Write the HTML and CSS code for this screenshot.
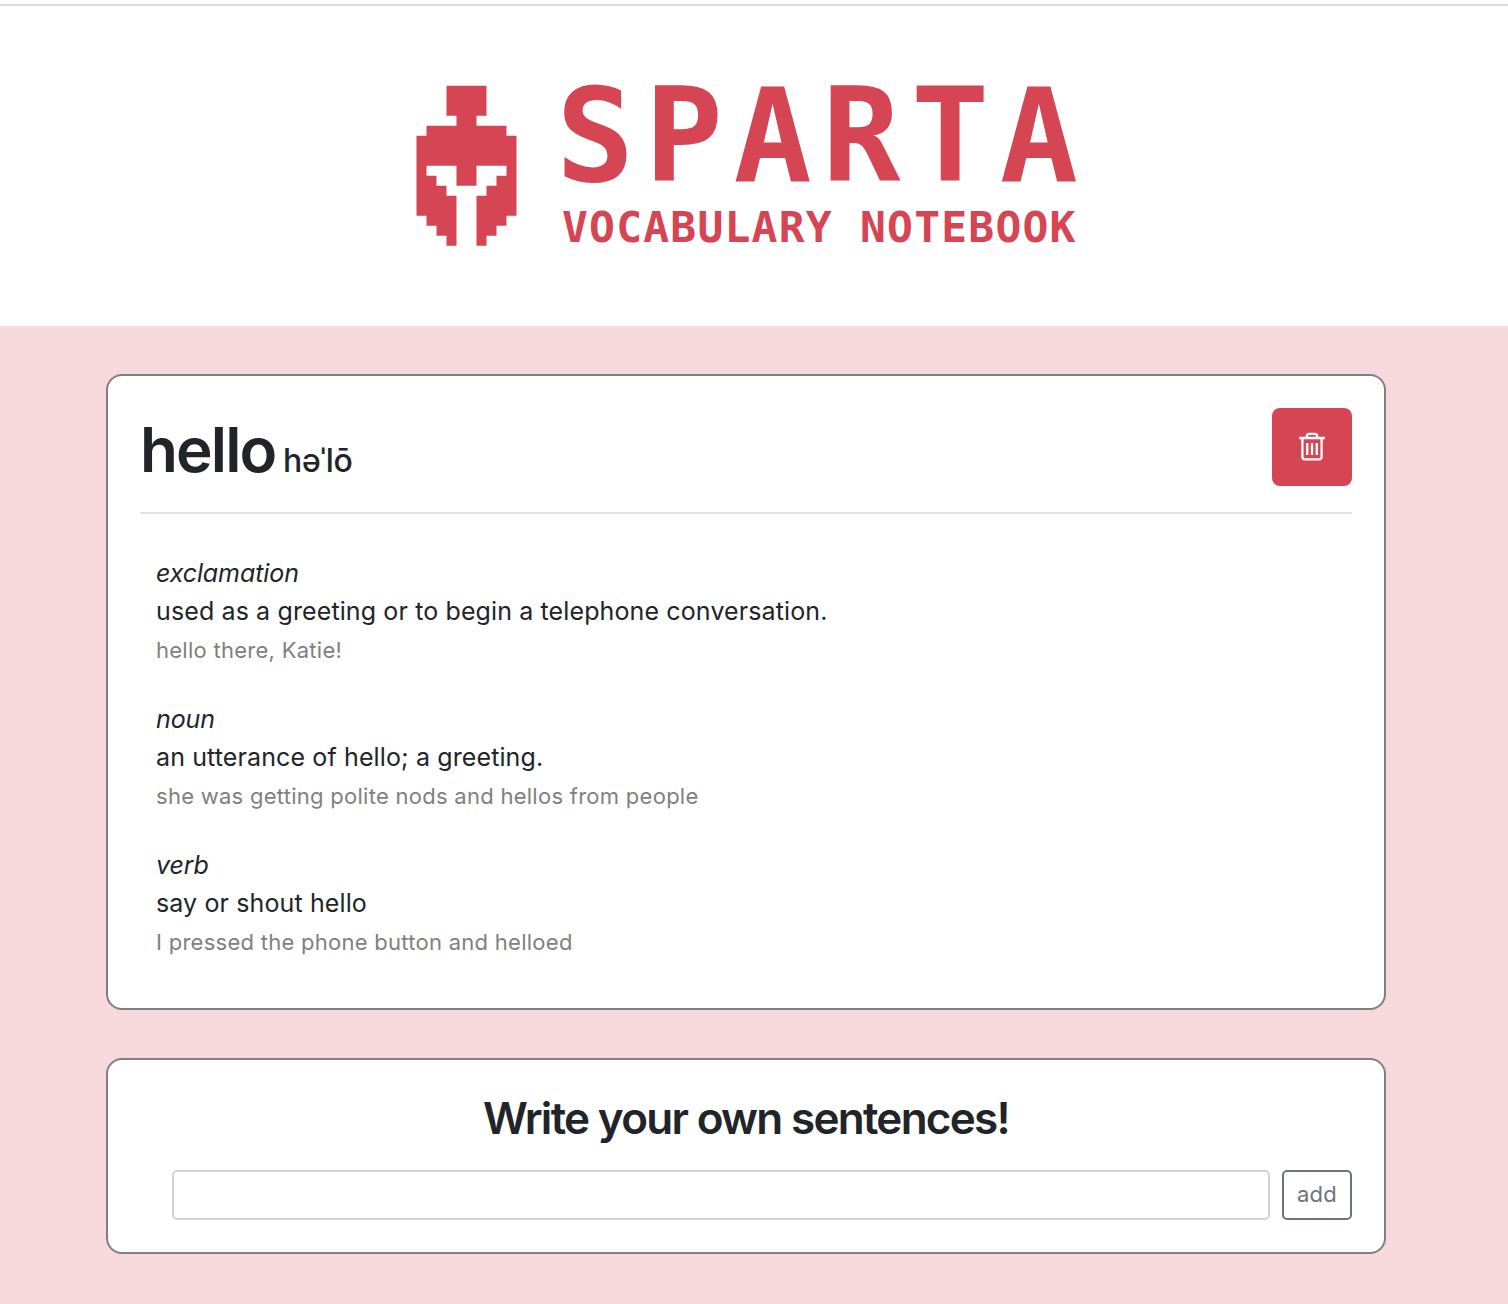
FILE: index.html
```html
<!DOCTYPE html>
<html lang="en">
<head>
    <meta charset="UTF-8">
    <meta name="viewport" content="width=device-width, initial-scale=1.0">
    <title>Sparta Vocabulary Notebook</title>
    <link rel="stylesheet" href="styles.css">
</head>
<body>
    <header class="banner">
        <svg class="logo" width="662" height="164" viewBox="0 0 662 164">
            <polygon transform="translate(1.5 1.7) scale(10)" points="3,0 7,0 7,3 6,3 6,4 9,4 9,5 10,5 10,13 9,13 9,14 8,14 8,15 7,15 7,16 6,16 6,11 7,11 7,10 8,10 8,9 9,9 9,8 6,8 6,10 4,10 4,8 1,8 1,9 2,9 2,10 3,10 3,11 4,11 4,16 3,16 3,15 2,15 2,14 1,14 1,13 0,13 0,5 1,5 1,4 4,4 4,3 3,3"/>
            <text class="logo-title" x="141" y="97">SPARTA</text>
            <text class="logo-sub" x="147" y="158">VOCABULARY NOTEBOOK</text>
        </svg>
    </header>

    <main class="container">
        <section class="card">
            <div class="word-row">
                <h1>hello <small>həˈlō</small></h1>
                <button type="button" class="btn-delete" aria-label="Delete">
                    <svg width="26" height="29" viewBox="0 0 26 29">
                        <path d="M0 6h26M7.8 6V4.2a2.4 2.4 0 0 1 2.4-2.4h5.6a2.4 2.4 0 0 1 2.4 2.4V6M3.4 6v18.7a2.6 2.6 0 0 0 2.6 2.6h14a2.6 2.6 0 0 0 2.6-2.6V6M8.2 11v12M13 11v12M17.8 11v12"/>
                    </svg>
                </button>
            </div>
            <hr>
            <div class="definitions">
                <div class="definition">
                    <i>exclamation</i>
                    <p class="meaning">used as a greeting or to begin a telephone conversation.</p>
                    <p class="example">hello there, Katie!</p>
                </div>
                <div class="definition">
                    <i>noun</i>
                    <p class="meaning">an utterance of hello; a greeting.</p>
                    <p class="example">she was getting polite nods and hellos from people</p>
                </div>
                <div class="definition">
                    <i>verb</i>
                    <p class="meaning">say or shout hello</p>
                    <p class="example">I pressed the phone button and helloed</p>
                </div>
            </div>
        </section>

        <section class="card card-write">
            <h2>Write your own sentences!</h2>
            <form class="sentence-form">
                <input type="text" class="sentence-input">
                <button type="button" class="btn-add">add</button>
            </form>
        </section>
    </main>
</body>
</html>
```
FILE: styles.css
```css
:root {
    --red: #d64553;
    --pink: #f7d9dd;
    --text-color: #212529;
    --gray: #808080;
}

* {
    margin: 0;
    padding: 0;
    box-sizing: border-box;
}

body {
    font-family: Inter, sans-serif;
    font-size: 25px;
    line-height: 38.4px;
    color: var(--text-color);
    background-color: var(--pink);
    overflow: hidden;
}

.banner {
    height: 326px;
    padding: 78px 0 0 415px;
    background: linear-gradient(#fff 4px, #dcdce0 4px, #dcdce0 6px, #fff 6px);
}

.logo {
    display: block;
    margin-top: 6px;
    fill: var(--red);
    overflow: visible;
}

.logo-title, .logo-sub {
    font-family: "DejaVu Sans Mono", monospace;
    font-weight: bold;
}

.logo-title {
    font-size: 130px;
    letter-spacing: 10.5px;
}

.logo-sub {
    font-size: 43px;
    letter-spacing: 1.2px;
}

.container {
    padding: 48px 122px 50px 106px;
}

.card {
    height: 636px;
    padding: 32px;
    background-color: white;
    border: 2px solid var(--gray);
    border-radius: 16px;
    margin-bottom: 48px;
}

.word-row {
    display: flex;
    justify-content: space-between;
    height: 104px;
}

h1 {
    font-size: 62px;
    font-weight: 600;
    line-height: 84px;
    letter-spacing: -1.9px;
    word-spacing: -6px;
}

h1 small {
    font-size: 32px;
    font-weight: 500;
    letter-spacing: -0.4px;
}

.btn-delete {
    width: 80px;
    height: 78px;
    padding-bottom: 2px;
    background-color: var(--red);
    border: none;
    border-radius: 8px;
    cursor: pointer;
}

.btn-delete svg {
    display: block;
    margin: 0 auto;
    fill: none;
    stroke: white;
    stroke-width: 2.3;
}

hr {
    border: none;
    border-top: 2px solid #e3e3e3;
}

.definitions {
    padding: 40px 16px 0;
}

.definition {
    height: 146px;
}

.definition i {
    display: block;
    letter-spacing: -0.1px;
}

.meaning {
    letter-spacing: 0.12px;
}

.example {
    font-size: 22px;
    letter-spacing: 0.27px;
    color: var(--gray);
}

.card-write {
    height: 196px;
    margin-bottom: 0;
    text-align: center;
}

h2 {
    font-size: 44px;
    font-weight: 600;
    line-height: 52px;
    letter-spacing: -1.7px;
    margin-bottom: 26px;
}

.sentence-form {
    display: flex;
    gap: 12px;
    padding-left: 32px;
}

.sentence-input {
    flex: 1;
    height: 50px;
    padding: 0 12px;
    font: inherit;
    border: 2px solid #ced4da;
    border-radius: 5px;
}

.btn-add {
    width: 70px;
    height: 50px;
    padding-bottom: 2px;
    font-family: inherit;
    font-size: 22px;
    letter-spacing: 0.3px;
    color: #6c757d;
    background-color: white;
    border: 2px solid #6c757d;
    border-radius: 5px;
}
```
